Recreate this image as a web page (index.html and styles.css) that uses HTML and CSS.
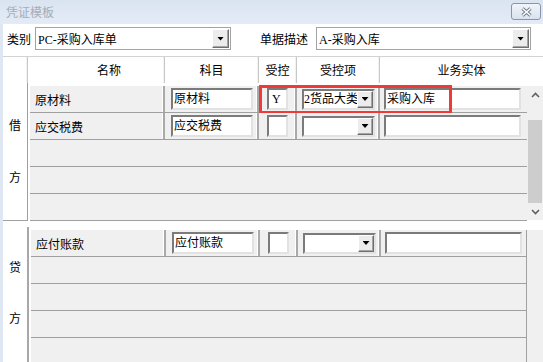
FILE: index.html
```html
<!DOCTYPE html>
<html>
<head>
<meta charset="utf-8">
<title>凭证模板</title>
<link rel="stylesheet" href="styles.css">
</head>
<body>
<div class="window">
  <div class="titlebar">
    <span class="title">凭证模板</span>
    <span class="close-btn">
      <svg width="13" height="10" viewBox="0 0 13 10"><path d="M2.5 1.5L10.5 8.5M10.5 1.5L2.5 8.5" stroke="#6f7b8c" stroke-width="3.4"/><path d="M2.5 1.5L10.5 8.5M10.5 1.5L2.5 8.5" stroke="#fff" stroke-width="1.5"/></svg>
    </span>
  </div>
  <div class="client">
    <div class="toolbar">
      <span class="lbl">类别</span>
      <div class="combo combo-type"><span class="combo-text">PC-采购入库单</span><span class="drop"><i class="arrow"></i></span></div>
      <span class="lbl lbl-desc">单据描述</span>
      <div class="combo combo-desc"><span class="combo-text">A-采购入库</span><span class="drop"><i class="arrow"></i></span></div>
    </div>

    <div class="head">
      <div class="hcell"></div>
      <div class="hcell h-name">名称</div>
      <div class="hcell">科目</div>
      <div class="hcell">受控</div>
      <div class="hcell">受控项</div>
      <div class="hcell">业务实体</div>
    </div>

    <div class="section debit">
      <div class="side-label"><span>借</span><span>方</span></div>
      <div class="grid-area">
        <div class="rows">
          <div class="row filled">
            <div class="cell name">原材料</div>
            <div class="cell"><div class="field f-subj">原材料</div></div>
            <div class="cell"><div class="field f-ctrl">Y</div></div>
            <div class="cell"><div class="mini"><span class="mini-text">2货品大类</span><span class="drop"><i class="arrow"></i></span></div></div>
            <div class="cell last"><div class="field f-entity">采购入库</div></div>
            <div class="highlight"></div>
          </div>
          <div class="row filled">
            <div class="cell name">应交税费</div>
            <div class="cell"><div class="field f-subj">应交税费</div></div>
            <div class="cell"><div class="field f-ctrl"></div></div>
            <div class="cell"><div class="mini"><span class="mini-text"></span><span class="drop"><i class="arrow"></i></span></div></div>
            <div class="cell last"><div class="field f-entity"></div></div>
          </div>
          <div class="row"></div>
          <div class="row"></div>
          <div class="row"></div>
        </div>
        <div class="vscroll">
          <div class="sb-btn"><svg width="9" height="6" viewBox="0 0 9 6"><path d="M1 5L4.5 1.5L8 5" fill="none" stroke="#606060" stroke-width="1.6"/></svg></div>
          <div class="sb-track"><div class="sb-thumb"></div></div>
          <div class="sb-btn"><svg width="9" height="6" viewBox="0 0 9 6"><path d="M1 1L4.5 4.5L8 1" fill="none" stroke="#606060" stroke-width="1.6"/></svg></div>
        </div>
      </div>
    </div>

    <div class="section credit">
      <div class="side-label"><span>贷</span><span>方</span></div>
      <div class="grid-area">
        <div class="rows">
          <div class="row filled">
            <div class="cell name">应付账款</div>
            <div class="cell"><div class="field f-subj">应付账款</div></div>
            <div class="cell"><div class="field f-ctrl"></div></div>
            <div class="cell"><div class="mini"><span class="mini-text"></span><span class="drop"><i class="arrow"></i></span></div></div>
            <div class="cell last"><div class="field f-entity"></div></div>
          </div>
          <div class="row"></div>
          <div class="row"></div>
          <div class="row"></div>
          <div class="row"></div>
        </div>
        <div class="filler"></div>
      </div>
    </div>
  </div>
</div>
</body>
</html>
```

FILE: styles.css
```css
body {
    margin: 0;
    padding: 0;
    background-color: #fff;
    font-family: "Liberation Serif", "Noto Sans CJK SC", serif;
    font-size: 12px;
    color: #000;
}

.window {
    width: 543px;
    height: 362px;
    overflow: hidden;
    display: flex;
    flex-direction: column;
}

/* title bar */
.titlebar {
    height: 24px;
    flex: none;
    display: flex;
    justify-content: space-between;
    align-items: flex-start;
    background: linear-gradient(#dae4f1, #e3ebf6);
}

.title {
    font-family: "Noto Sans CJK SC", sans-serif;
    color: #a4adb8;
    line-height: 24px;
    padding-left: 6px;
}

.close-btn {
    width: 30px;
    height: 17px;
    margin: 3px 2px 0 0;
    box-sizing: border-box;
    border: 1px solid #8796ab;
    border-radius: 3px;
    background: linear-gradient(#f1f5fa, #d8e2ee);
    display: flex;
    align-items: center;
    justify-content: center;
}

.client {
    flex: 1;
    display: flex;
    flex-direction: column;
    border-left: 3px solid #dfe7f2;
    background-color: #fff;
    min-height: 0;
}

/* top toolbar with two combos */
.toolbar {
    display: flex;
    align-items: center;
    padding: 3px 0 6px 4px;
    border-bottom: 1px solid #d3d3d3;
}

.lbl {
    font-family: "Noto Sans CJK SC", sans-serif;
    margin-right: 4px;
}

.lbl-desc {
    margin-left: 29px;
    margin-right: 8px;
}

.combo {
    height: 23px;
    box-sizing: border-box;
    border: 1px solid #a3a3a3;
    background-color: #fff;
    display: flex;
    align-items: center;
}

.combo-type { width: 196px; }
.combo-desc { width: 215px; }

.combo-text {
    flex: 1;
    padding-left: 2px;
    white-space: nowrap;
}

.drop {
    width: 17px;
    height: 19px;
    margin-right: 1px;
    box-sizing: border-box;
    background-color: #ececec;
    border: 1px solid;
    border-color: #fff #6f6f6f #6f6f6f #fff;
    box-shadow: inset -1px -1px 0 #a5a5a5;
    display: flex;
    align-items: center;
    justify-content: center;
    flex: none;
}

.arrow {
    display: block;
    width: 7px;
    height: 4px;
    background-color: #000;
    clip-path: polygon(0 0, 100% 0, 50% 100%);
}

/* grid header */
.head {
    display: grid;
    grid-template-columns: 25px 137px 94px 38px 83px 1fr;
    height: 26px;
}

.hcell {
    box-sizing: border-box;
    border-right: 1px solid #c8c8c8;
    box-shadow: inset -1px 0 0 #f2f2f2;
    text-align: center;
    line-height: 26px;
    font-family: "Noto Sans CJK SC", sans-serif;
}

.hcell:last-child {
    border-right: none;
    box-shadow: none;
}

.h-name { padding-left: 26px; }

/* sections */
.section {
    display: flex;
}

.debit { height: 138px; }

.credit {
    flex: 1;
    margin-top: 6px;
}

.side-label {
    box-sizing: border-box;
    width: 25px;
    border-right: 1px solid #a0a0a0;
    display: flex;
    flex-direction: column;
    align-items: center;
    font-family: "Noto Sans CJK SC", sans-serif;
    line-height: 16px;
}

.debit .side-label {
    border-bottom: 1px solid #a0a0a0;
    padding-top: 34px;
    gap: 36px;
}

.credit .side-label {
    width: 26px;
    border-right: 2px solid #a8a8a8;
    padding-top: 32px;
    gap: 35px;
}

.grid-area {
    flex: 1;
    display: flex;
    margin-left: 2px;
    padding-top: 3px;
}

.rows {
    width: 497px;
}

.credit .rows {
    width: 495px;
    border-right: 1px solid #a0a0a0;
}

.row {
    position: relative;
    height: 27px;
    box-sizing: border-box;
    border-bottom: 1px solid #a0a0a0;
    background-color: #f0f0f0;
}

.row.filled {
    display: grid;
    grid-template-columns: 135px 94px 38px 83px 1fr;
}

.cell {
    display: flex;
    align-items: center;
    border-right: 2px solid #a9a9a9;
    box-shadow: inset -1px 0 0 #fff;
    min-width: 0;
}

.cell.last {
    border-right: none;
    box-shadow: none;
}

.cell.name {
    padding-left: 5px;
    font-family: "Noto Sans CJK SC", sans-serif;
}

.field {
    height: 22px;
    box-sizing: border-box;
    background-color: #fff;
    border: 2px solid;
    border-color: #7b7b7b #e2e2e2 #e2e2e2 #7b7b7b;
    padding-left: 1px;
    line-height: 18px;
    white-space: nowrap;
    overflow: hidden;
}

.f-subj { margin-left: 6px; width: 82px; }
.f-ctrl { margin-left: 8px; width: 21px; padding-left: 3px; }
.f-entity { margin-left: 4px; width: 137px; }

.mini {
    margin-left: 5px;
    width: 73px;
    height: 21px;
    box-sizing: border-box;
    background-color: #fff;
    border: 2px solid;
    border-color: #7b7b7b #e2e2e2 #e2e2e2 #7b7b7b;
    display: flex;
    align-items: center;
}

.mini-text {
    flex: 1;
    min-width: 0;
    overflow: hidden;
    white-space: nowrap;
    line-height: 17px;
}

.mini .drop {
    width: 16px;
    height: 17px;
    margin-right: 0;
}

/* red annotation rectangle over the controlled columns */
.highlight {
    position: absolute;
    left: 229px;
    top: -1px;
    width: 193px;
    height: 29px;
    box-sizing: border-box;
    border: 3px solid #ee3b37;
}

/* scrollbar */
.vscroll {
    width: 16px;
    height: 134px;
    background-color: #f0f0f0;
    display: flex;
    flex-direction: column;
}

.sb-btn {
    height: 17px;
    display: flex;
    align-items: center;
    justify-content: center;
    flex: none;
}

.sb-track {
    flex: 1;
    padding-top: 17px;
    display: flex;
    flex-direction: column;
}

.sb-thumb {
    flex: 1;
    margin: 0 1px;
    background-color: #cdcdcd;
}

.filler {
    width: 16px;
    background-color: #f0f0f0;
}
```
